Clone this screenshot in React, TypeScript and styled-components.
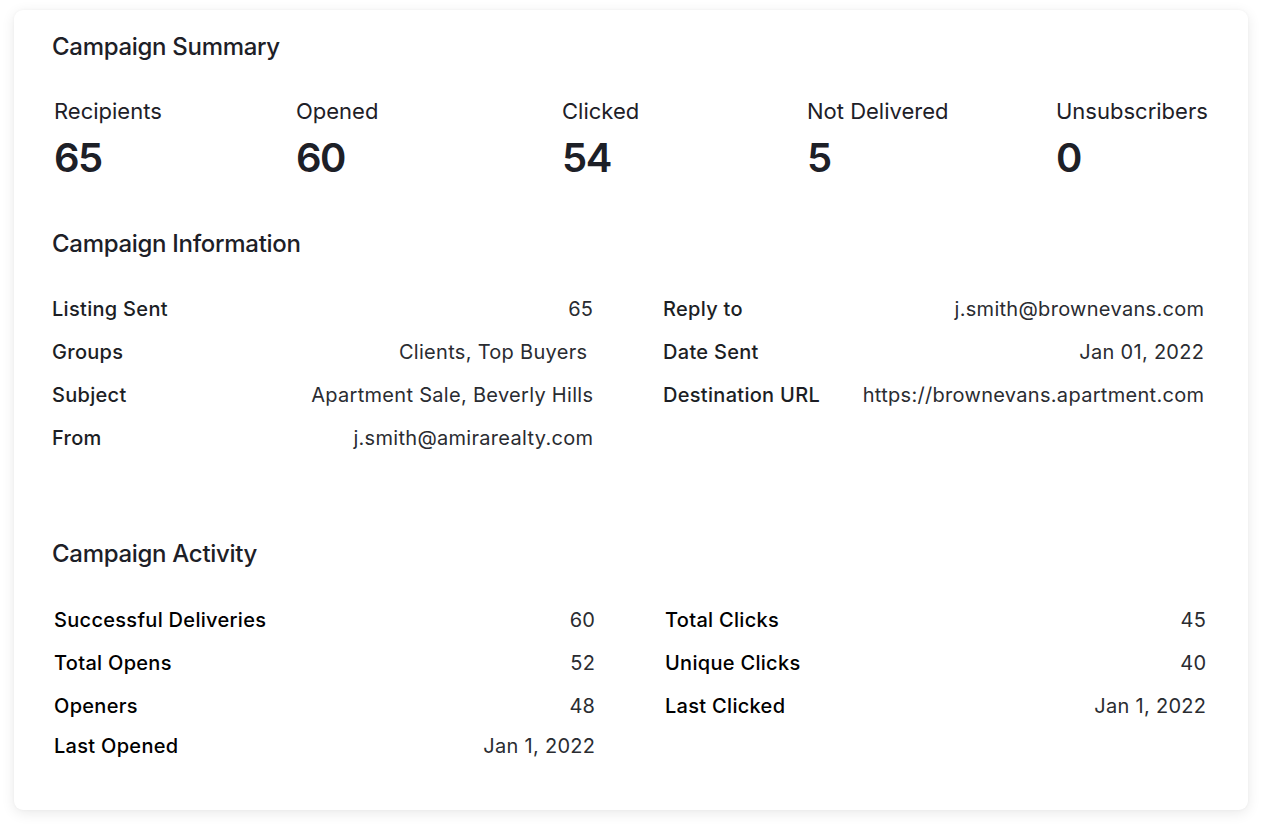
import React from "react";
import styled, { createGlobalStyle } from "styled-components";

const Global = createGlobalStyle`
  html, body { margin: 0; padding: 0; background: #ffffff; }
  body { font-family: Inter, "Noto Sans", sans-serif; -webkit-font-smoothing: antialiased; }
`;

const Page = styled.div`
  width: 1272px;
  height: 836px;
  padding: 10px 24px 26px 14px;
  box-sizing: border-box;
`;

const Card = styled.section`
  width: 1234px;
  height: 800px;
  box-sizing: border-box;
  background: #fff;
  border-radius: 9px;
  box-shadow: 0 3px 14px rgba(0, 0, 0, 0.09), 0 0 3px rgba(0, 0, 0, 0.04);
  padding: 23px 38px 0 38px;
  display: flex;
  flex-direction: column;
`;

const Heading = styled.h2<{ $mt?: number }>`
  margin: ${(p) => p.$mt ?? 0}px 0 0 0;
  font-family: Inter, "Noto Sans", sans-serif;
  font-weight: 500;
  font-size: 24px;
  line-height: 28px;
  color: #1d2027;
  letter-spacing: -0.3px;
`;

const SummaryGrid = styled.div`
  margin-top: 36px;
  padding-left: 2px;
  display: grid;
  grid-template-columns: 242px 266px 245px 249px auto;
`;

const Stat = styled.div`
  display: flex;
  flex-direction: column;
  gap: 10px;
`;

const StatLabel = styled.div`
  font-family: Inter, "Noto Sans", sans-serif;
  font-size: 22px;
  line-height: 28px;
  font-weight: 400;
  color: #1d2027;
`;

const StatValue = styled.div`
  font-family: Inter, "Noto Sans", sans-serif;
  font-size: 40px;
  line-height: 46px;
  font-weight: 600;
  color: #1d2027;
  letter-spacing: -1.5px;
`;

const TwoCol = styled.div<{ $mt: number; $shift?: number }>`
  margin-top: ${(p) => p.$mt}px;
  padding-left: ${(p) => p.$shift ?? 0}px;
  display: grid;
  grid-template-columns: 541px 541px;
  column-gap: 70px;
  align-items: start;
`;

const RowList = styled.div`
  display: flex;
  flex-direction: column;
`;

const Row = styled.div<{ $h?: number }>`
  height: ${(p) => p.$h ?? 43}px;
  display: flex;
  align-items: center;
  justify-content: space-between;
  font-family: Inter, "Noto Sans", sans-serif;
  font-size: 20px;
  letter-spacing: 0.3px;
`;

const Label = styled.span<{ $dark?: boolean }>`
  font-weight: 500;
  color: ${(p) => (p.$dark ? "#000000" : "#1c1e24")};
`;

const Value = styled.span`
  font-weight: 400;
  color: #2a2c31;
  white-space: pre;
  margin-right: -0.3px;
`;

type Item = [string, string];

const summary: Item[] = [
  ["Recipients", "65"],
  ["Opened", "60"],
  ["Clicked", "54"],
  ["Not Delivered", "5"],
  ["Unsubscribers", "0"],
];

const infoLeft: Item[] = [
  ["Listing Sent", "65"],
  ["Groups", "Clients, Top Buyers "],
  ["Subject", "Apartment Sale, Beverly Hills"],
  ["From", "j.smith@amirarealty.com"],
];
const infoRight: Item[] = [
  ["Reply to", "j.smith@brownevans.com"],
  ["Date Sent", "Jan 01, 2022"],
  ["Destination URL", "https://brownevans.apartment.com"],
];
const actLeft: Item[] = [
  ["Successful Deliveries", "60"],
  ["Total Opens", "52"],
  ["Openers", "48"],
  ["Last Opened", "Jan 1, 2022"],
];
const actRight: Item[] = [
  ["Total Clicks", "45"],
  ["Unique Clicks", "40"],
  ["Last Clicked", "Jan 1, 2022"],
];

const Rows = ({ items, dark }: { items: Item[]; dark?: boolean }) => (
  <RowList>
    {items.map(([l, v], i) => (
      <Row key={l} $h={dark && i === 3 ? 37 : 43}>
        <Label $dark={dark}>{l}</Label>
        <Value>{v}</Value>
      </Row>
    ))}
  </RowList>
);

export default function App() {
  return (
    <>
      <Global />
      <Page>
        <Card>
          <Heading>Campaign Summary</Heading>
          <SummaryGrid>
            {summary.map(([l, v]) => (
              <Stat key={l}>
                <StatLabel>{l}</StatLabel>
                <StatValue>{v}</StatValue>
              </Stat>
            ))}
          </SummaryGrid>
          <Heading $mt={49}>Campaign Information</Heading>
          <TwoCol $mt={29}>
            <Rows items={infoLeft} />
            <Rows items={infoRight} />
          </TwoCol>
          <Heading $mt={81}>Campaign Activity</Heading>
          <TwoCol $mt={30} $shift={2}>
            <Rows items={actLeft} dark />
            <Rows items={actRight} dark />
          </TwoCol>
        </Card>
      </Page>
    </>
  );
}
